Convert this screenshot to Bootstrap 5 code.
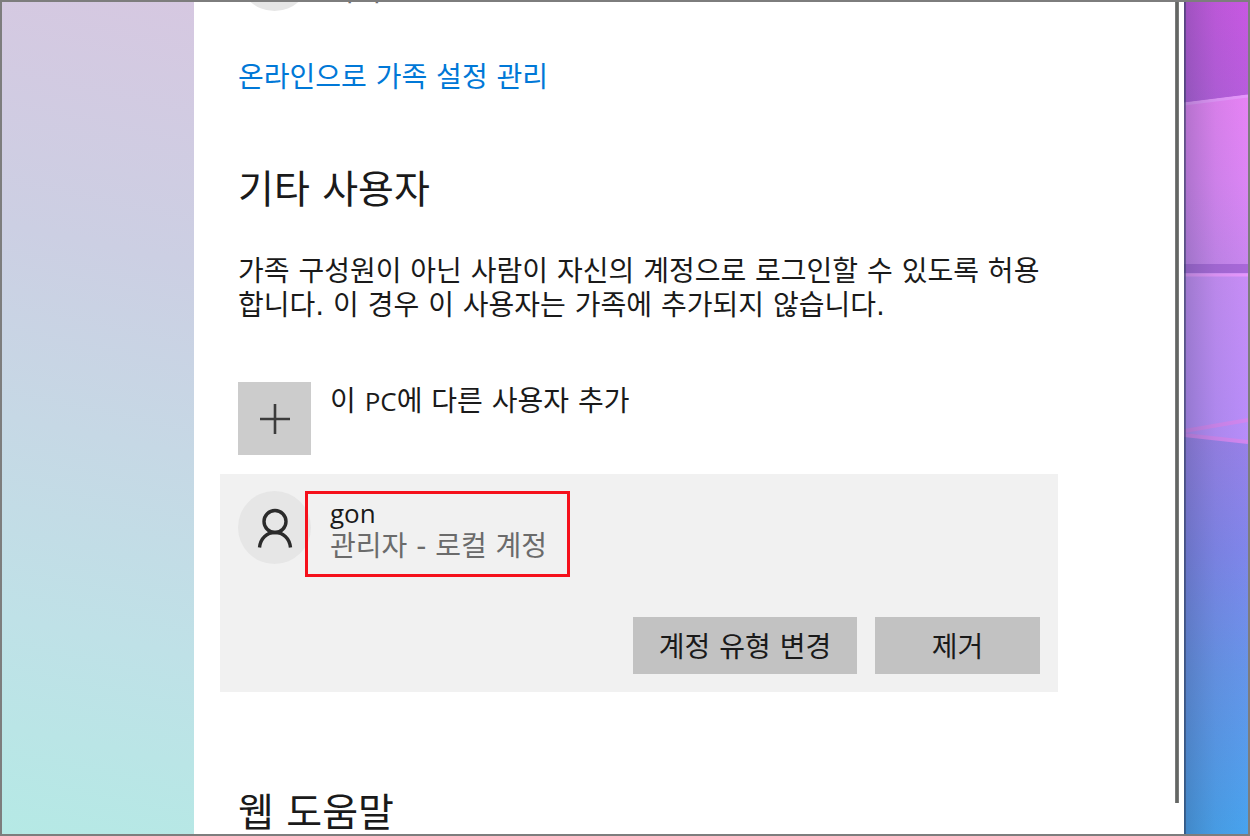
<!DOCTYPE html>
<html lang="ko">
<head>
<meta charset="utf-8">
<meta name="viewport" content="width=device-width, initial-scale=1">
<title>가족 및 다른 사용자</title>
<link href="https://cdn.jsdelivr.net/npm/bootstrap@5.3.0/dist/css/bootstrap.min.css" rel="stylesheet">
<style>
  body { font-family: "DejaVu Sans", "Noto Sans CJK KR", sans-serif; font-size: 28px; line-height: 34px; color: #1a1a1a; }
  .desktop { border: 2px solid #7d7d7d; }
  .side-pane { width: 192px; background: linear-gradient(192deg, #d6c8e1 0%, #cccfe3 30%, #c6d8e5 52%, #bfe1e7 75%, #b5e9e5 100%); }
  .settings-body { padding-left: 26px; }
  .settings-column { max-width: 838px; }
  .inset-row { padding-left: 18px; padding-right: 18px; }
  .scrolled-row { margin-top: -64px; }
  .scrolled-role { padding-left: 19px; padding-bottom: 2px; }
  .avatar { width: 73px; height: 73px; background: #e6e6e6; }
  .family-link { color: #0078d7; margin-top: 50px; }
  .section-title { font-size: 39px; line-height: 40px; font-weight: 400; }
  .title-users { margin-top: 75px; margin-bottom: 45px; }
  .title-help { margin-top: 101px; }
  .latin { font-family: "Open Sans", sans-serif; font-size: 26px; }
  .add-user { --bs-btn-font-size: 28px; --bs-btn-line-height: 34px; --bs-btn-color: #1a1a1a; margin-top: 59px; gap: 19px; }
  .add-label { padding-top: 2px; }
  .plus-tile { width: 73px; height: 73px; background: #ccc; }
  .user-card { background: #f1f1f1; margin-top: 19px; padding-top: 17px; padding-bottom: 18px; }
  .account-box { border: 3px solid #f5101b; margin-left: -6px; padding: 2px 20px 11px 22px; height: 86px; }
  .account-type { color: #6b6b6b; }
  .card-actions { margin-top: 40px; gap: 18px; }
  .btn-tile { --bs-btn-bg: #c2c2c2; --bs-btn-hover-bg: #b5b5b5; --bs-btn-color: #1a1a1a; --bs-btn-font-size: 28px; --bs-btn-line-height: 34px; height: 57px; padding: 4px 0 0; }
  .btn-change { width: 224px; }
  .btn-remove { width: 165px; }
  .scroll-track { width: 9px; padding-bottom: 31px; }
  .scroll-thumb { width: 4px; background: linear-gradient(90deg, #858585, #626562 40%, #626562 60%, #858585); }
  .wallpaper { width: 64px; }
</style>
</head>
<body>
<div class="desktop d-flex vh-100 overflow-hidden">
  <div class="side-pane flex-shrink-0"></div>
  <main class="settings-body flex-grow-1 bg-white overflow-hidden">
    <div class="settings-column">
      <div class="inset-row scrolled-row d-flex">
        <div class="avatar rounded-circle flex-shrink-0"></div>
        <div class="scrolled-role account-type d-flex align-items-end">자녀</div>
      </div>
      <div class="inset-row">
        <a href="#" class="family-link d-inline-block text-decoration-none">온라인으로 가족 설정 관리</a>
        <h2 class="section-title title-users">기타 사용자</h2>
        <p class="mb-0">가족 구성원이 아닌 사람이 자신의 계정으로 로그인할 수 있도록 허용<br>합니다. 이 경우 이 사용자는 가족에 추가되지 않습니다.</p>
        <button type="button" class="add-user btn p-0 border-0 rounded-0 d-flex align-items-start">
          <span class="plus-tile d-flex align-items-center justify-content-center flex-shrink-0">
            <svg width="30" height="30" viewBox="0 0 30 30" stroke="#3c3c3c" stroke-width="2.6" aria-hidden="true"><path d="M15 0v30M0 15h30"/></svg>
          </span>
          <span class="add-label">이 <span class="latin">PC</span>에 다른 사용자 추가</span>
        </button>
      </div>
      <section class="user-card inset-row">
        <div class="d-flex">
          <div class="avatar rounded-circle d-flex align-items-center justify-content-center flex-shrink-0">
            <svg width="36" height="40" viewBox="0 0 36 40" fill="none" stroke="#2b2b2b" stroke-width="3.4" aria-hidden="true"><circle cx="18" cy="13.5" r="11"/><path d="M2.500 39.500C3.500 30 10 24.500 18 24.500S32.500 30 33.500 39.500"/></svg>
          </div>
          <div class="account-box">
            <div class="account-name latin">gon</div>
            <div class="account-type text-nowrap">관리자 - 로컬 계정</div>
          </div>
        </div>
        <div class="card-actions d-flex justify-content-end">
          <button type="button" class="btn btn-tile btn-change border-0 rounded-0 text-nowrap">계정 유형 변경</button>
          <button type="button" class="btn btn-tile btn-remove border-0 rounded-0">제거</button>
        </div>
      </section>
      <div class="inset-row">
        <h2 class="section-title title-help mb-0">웹 도움말</h2>
      </div>
    </div>
  </main>
  <div class="scroll-track bg-white d-flex flex-shrink-0"><div class="scroll-thumb"></div></div>
  <svg class="wallpaper h-100 flex-shrink-0" viewBox="0 0 64 832" preserveAspectRatio="none" aria-hidden="true">
    <defs>
      <linearGradient id="top" x2="0" y2="1"><stop stop-color="#c858e2"/><stop offset="1" stop-color="#b65ddd"/></linearGradient>
      <linearGradient id="pink" x2="0" y2="1"><stop stop-color="#e783f5"/><stop offset=".5" stop-color="#dc85f5"/><stop offset="1" stop-color="#c886ef"/></linearGradient>
      <linearGradient id="violet" x2="0" y2="1"><stop stop-color="#c88df6"/><stop offset="1" stop-color="#b68dfa"/></linearGradient>
      <linearGradient id="blue" x2="0" y2="1"><stop stop-color="#9a80e8"/><stop offset=".3" stop-color="#7f86eb"/><stop offset=".6" stop-color="#6595e9"/><stop offset="1" stop-color="#47a3ee"/></linearGradient>
      <linearGradient id="shade"><stop stop-color="#203050" stop-opacity=".5"/><stop offset=".04" stop-color="#304060" stop-opacity=".26"/><stop offset=".5" stop-color="#405070" stop-opacity=".09"/><stop offset="1" stop-color="#405070" stop-opacity="0"/></linearGradient>
    </defs>
    <path fill="url(#top)" d="M0 0h64v93L0 101z"/>
    <path fill="url(#pink)" d="M0 101L64 93v170H0z"/>
    <path fill="#a968d9" d="M0 262h64v9H0z"/>
    <path fill="url(#violet)" d="M0 271h64v170H0z"/>
    <path fill="url(#blue)" d="M0 431L64 440v392H0z"/>
    <path fill="none" stroke="#e797fc" stroke-width="3" d="M0 102L64 94M0 273h64"/>
    <path fill="none" stroke="#d286f0" stroke-width="4" d="M0 429L64 418M0 433L64 440"/>
    <path fill="url(#shade)" d="M0 0h64v832H0z"/>
    <path fill="#304060" fill-opacity=".45" d="M0 0h2v832H0z"/>
  </svg>
</div>
<script src="https://cdn.jsdelivr.net/npm/bootstrap@5.3.0/dist/js/bootstrap.bundle.min.js"></script>
</body>
</html>
